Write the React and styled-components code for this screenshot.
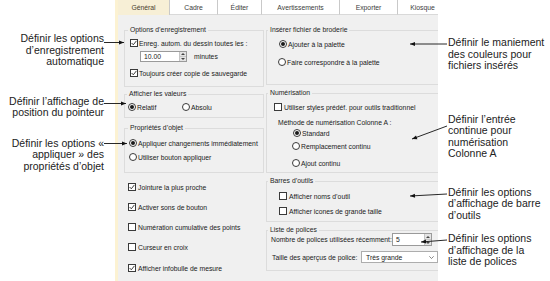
import React from 'react';
import styled, { createGlobalStyle } from 'styled-components';

const GlobalStyle = createGlobalStyle`
  html, body {
    margin: 0;
    padding: 0;
    background: #ffffff;
  }
  body {
    width: 550px;
    height: 281px;
    overflow: hidden;
  }
`

const Page = styled.div`
  position: relative;
  display: flex;
  width: 550px;
  height: 281px;
  font-family: 'Liberation Sans', Arial, sans-serif;
  color: #1a1a1a;
`

const Notes = styled.div`
  display: flex;
  flex-direction: column;
  flex-shrink: 0;
  width: ${p => p.$w}px;
  box-sizing: border-box;
  padding: ${p => (p.$right ? '0 0 0 10px' : '0 11px 0 0')};
  text-align: ${p => (p.$right ? 'left' : 'right')};
  font-size: 10.5px;
  line-height: 11.5px;
  color: #222222;
  white-space: nowrap;
`

const Note = styled.div`
  margin-top: ${p => p.$mt}px;
`

const Dialog = styled.div`
  display: flex;
  flex-shrink: 0;
  width: 323px;
  height: 281px;
  overflow: hidden;
`

const Strip = styled.div`
  width: 3px;
  flex-shrink: 0;
  background-color: #fcf2d2;
`

const DialogBody = styled.div`
  flex: 1;
  min-width: 0;
  display: flex;
  flex-direction: column;
  background-color: #f0f0f0;
`

const TabRow = styled.div`
  display: flex;
  height: 15px;
  flex-shrink: 0;
  background-color: #ffffff;
`

const Tab = styled.div`
  width: ${p => p.$w}px;
  flex-shrink: 0;
  display: flex;
  align-items: center;
  justify-content: center;
  box-sizing: border-box;
  font-size: 6.8px;
  color: ${p => (p.$active ? '#4a4030' : '#3c3c3c')};
  background-color: ${p => (p.$active ? '#f7efd6' : '#ffffff')};
  border-right: 1px solid #c9c9c9;
  border-bottom: ${p => (p.$active ? 'none' : '1px solid #d9d9d9')};
`

const Panel = styled.div`
  display: grid;
  grid-template-columns: 140px 180px;
  column-gap: 2px;
  align-items: start;
  padding: 11px 0 0 6px;
`

const Column = styled.div`
  display: flex;
  flex-direction: column;
`

const Group = styled.fieldset`
  margin: ${p => p.$mt || 0}px 0 0 0;
  padding: 0;
  min-width: 0;
  height: ${p => p.$h}px;
  box-sizing: border-box;
  border: 1px solid #dcdcdc;
`

const Legend = styled.legend`
  margin-left: ${p => p.$lx}px;
  padding: 0 2px;
  font-size: 6.8px;
  line-height: 8px;
  color: #1e1e1e;
`

const Row = styled.div`
  display: flex;
  align-items: center;
  height: ${p => p.$h || 10}px;
  margin-top: ${p => p.$mt || 0}px;
  padding-left: ${p => p.$pl || 0}px;
  font-size: 6.8px;
  white-space: nowrap;
`

const Label = styled.span`
  display: inline-block;
  width: ${p => (p.$w ? `${p.$w}px` : 'auto')};
  margin-left: ${p => p.$ml || 0}px;
`

const Box = styled.span`
  position: relative;
  display: inline-flex;
  align-items: center;
  justify-content: center;
  width: 8px;
  height: 8px;
  box-sizing: border-box;
  border: 1px solid #3a3a3a;
  border-radius: ${p => (p.$round ? '50%' : '0')};
  background-color: #ffffff;
  margin-right: ${p => p.$gap ?? 1}px;
  flex-shrink: 0;
`

const Dot = styled.span`
  width: 4px;
  height: 4px;
  border-radius: 50%;
  background-color: #1a1a1a;
`

const SpinBox = styled.div`
  display: flex;
  width: ${p => p.$w}px;
  height: ${p => p.$h}px;
  margin-left: ${p => p.$ml || 0}px;
  box-sizing: border-box;
  border: 1px solid #9a9a9a;
  background-color: #ffffff;
`

const SpinText = styled.div`
  flex: 1;
  display: flex;
  align-items: center;
  padding-left: ${p => p.$pl || 3}px;
  font-size: 6.8px;
`

const SpinButtons = styled.div`
  width: 6px;
  display: flex;
  flex-direction: column;
  border-left: 1px solid #c4c4c4;
  background-color: #e4e4e4;
`

const SpinHalf = styled.div`
  flex: 1;
  display: flex;
  align-items: center;
  justify-content: center;
  border-bottom: ${p => (p.$top ? '1px solid #c8c8c8' : 'none')};
`

const Select = styled.div`
  display: flex;
  align-items: center;
  justify-content: space-between;
  width: 77px;
  height: 12px;
  box-sizing: border-box;
  padding: 0 3px 0 4px;
  border: 1px solid #adadad;
  background-color: #ffffff;
  font-size: 6.8px;
`

const Arrows = styled.svg`
  position: absolute;
  left: 0;
  top: 0;
  pointer-events: none;
`

const CheckBox = ({ checked, gap }) => (
  <Box $gap={gap}>
    {checked && (
      <svg width="6" height="6" viewBox="0 0 6 6">
        <polyline points="0.6,3 2.3,4.8 5.4,0.9" fill="none" stroke="#2a2a2a" strokeWidth="0.9" />
      </svg>
    )}
  </Box>
)

const Radio = ({ checked, gap }) => (
  <Box $round $gap={gap}>
    {checked && <Dot />}
  </Box>
)

const Spinner = () => (
  <SpinButtons>
    <SpinHalf $top>
      <svg width="4" height="2" viewBox="0 0 4 2"><polygon points="0,2 4,2 2,0" fill="#444" /></svg>
    </SpinHalf>
    <SpinHalf>
      <svg width="4" height="2" viewBox="0 0 4 2"><polygon points="0,0 4,0 2,2" fill="#444" /></svg>
    </SpinHalf>
  </SpinButtons>
)

const tabs = [
  { label: 'Général', w: 52, active: true },
  { label: 'Cadre', w: 48 },
  { label: 'Éditer', w: 44 },
  { label: 'Avertissements', w: 78 },
  { label: 'Exporter', w: 58 },
  { label: 'Kiosque', w: 50 },
]

const leftArrows = [
  [104, 42.5, 124, 42.5],
  [104, 103.5, 126, 103.5],
  [104, 143.5, 127, 143.5],
]

const rightArrows = [
  [447, 44, 410, 44],
  [447, 126, 412, 139],
  [447, 194, 410, 196],
  [447, 240, 421, 242],
]

const arrowHead = ([x1, y1, x2, y2]) => {
  const a = Math.atan2(y2 - y1, x2 - x1)
  const len = 5
  const half = 2
  const bx = x2 - len * Math.cos(a)
  const by = y2 - len * Math.sin(a)
  const px = -Math.sin(a) * half
  const py = Math.cos(a) * half
  return `${x2},${y2} ${bx + px},${by + py} ${bx - px},${by - py}`
}

const App = () => {
  return (
    <>
      <GlobalStyle />
      <Page>
        <Notes $w={115}>
          <Note $mt={33}>Définir les options<br />d’enregistrement<br />automatique</Note>
          <Note $mt={28}>Définir l’affichage de<br />position du pointeur</Note>
          <Note $mt={19}>Définir les options «<br />appliquer » des<br />propriétés d’objet</Note>
        </Notes>

        <Dialog>
          <Strip />
          <DialogBody>
            <TabRow>
              {tabs.map(t => (
                <Tab key={t.label} $w={t.w} $active={t.active}>{t.label}</Tab>
              ))}
            </TabRow>
            <Panel>
              <Column>
                <Group $h={61}>
                  <Legend $lx={3}>Options d’enregistrement</Legend>
                  <Row $mt={4} $pl={5}>
                    <CheckBox checked />
                    Enreg. autom. du dessin toutes les :
                  </Row>
                  <Row $mt={3} $h={11} $pl={15}>
                    <SpinBox $w={47} $h={11}>
                      <SpinText $pl={3}>10.00</SpinText>
                      <Spinner />
                    </SpinBox>
                    <Label $ml={7}>minutes</Label>
                  </Row>
                  <Row $mt={6} $pl={5}>
                    <CheckBox checked />
                    Toujours créer copie de sauvegarde
                  </Row>
                </Group>

                <Group $mt={3} $h={28}>
                  <Legend $lx={2}>Afficher les valeurs</Legend>
                  <Row $mt={4} $pl={3}>
                    <Radio checked />
                    <Label $w={45}>Relatif</Label>
                    <Radio />
                    Absolu
                  </Row>
                </Group>

                <Group $mt={6} $h={49}>
                  <Legend $lx={3}>Propriétés d’objet</Legend>
                  <Row $mt={6} $pl={4}>
                    <Radio checked />
                    Appliquer changements immédiatement
                  </Row>
                  <Row $mt={4} $pl={4}>
                    <Radio />
                    Utiliser bouton appliquer
                  </Row>
                </Group>

                <Row $mt={9} $pl={4}>
                  <CheckBox checked gap={2} />
                  Jointure la plus proche
                </Row>
                <Row $mt={10} $pl={4}>
                  <CheckBox checked gap={2} />
                  Activer sons de bouton
                </Row>
                <Row $mt={10} $pl={4}>
                  <CheckBox gap={2} />
                  Numération cumulative des points
                </Row>
                <Row $mt={10} $pl={4}>
                  <CheckBox gap={2} />
                  Curseur en croix
                </Row>
                <Row $mt={11} $pl={4}>
                  <CheckBox checked gap={2} />
                  Afficher infobulle de mesure
                </Row>
              </Column>

              <Column>
                <Group $h={59}>
                  <Legend $lx={1}>Insérer fichier de broderie</Legend>
                  <Row $mt={5} $pl={12}>
                    <Radio checked />
                    Ajouter à la palette
                  </Row>
                  <Row $mt={8} $pl={11}>
                    <Radio />
                    Faire correspondre à la palette
                  </Row>
                </Group>

                <Group $mt={4} $h={84}>
                  <Legend $lx={1}>Numérisation</Legend>
                  <Row $mt={5} $pl={7}>
                    <CheckBox gap={2} />
                    Utiliser styles prédéf. pour outils traditionnel
                  </Row>
                  <Row $mt={5} $pl={11}>
                    Méthode de numérisation Colonne A :
                  </Row>
                  <Row $mt={1} $pl={26}>
                    <Radio checked />
                    Standard
                  </Row>
                  <Row $mt={3} $pl={25}>
                    <Radio />
                    Remplacement continu
                  </Row>
                  <Row $mt={7} $pl={25}>
                    <Radio />
                    Ajout continu
                  </Row>
                </Group>

                <Group $mt={4} $h={45}>
                  <Legend $lx={1}>Barres d’outils</Legend>
                  <Row $mt={6} $pl={12}>
                    <CheckBox gap={2} />
                    Afficher noms d’outil
                  </Row>
                  <Row $mt={5} $pl={12}>
                    <CheckBox gap={2} />
                    Afficher icones de grande taille
                  </Row>
                </Group>

                <Group $mt={4} $h={45}>
                  <Legend $lx={1}>Liste de polices</Legend>
                  <Row $mt={-1} $h={13} $pl={4}>
                    <Label $w={121}>Nombre de polices utilisées récemment:</Label>
                    <SpinBox $w={40} $h={13}>
                      <SpinText $pl={3}>5</SpinText>
                      <Spinner />
                    </SpinBox>
                  </Row>
                  <Row $mt={5} $h={12} $pl={5}>
                    <Label $w={89}>Taille des aperçus de police:</Label>
                    <Select>
                      Très grande
                      <svg width="5" height="3" viewBox="0 0 5 3">
                        <polyline points="0.3,0.3 2.5,2.5 4.7,0.3" fill="none" stroke="#555" strokeWidth="0.7" />
                      </svg>
                    </Select>
                  </Row>
                </Group>
              </Column>
            </Panel>
          </DialogBody>
        </Dialog>

        <Notes $w={112} $right>
          <Note $mt={37}>Définir le maniement<br />des couleurs pour<br />fichiers insérés</Note>
          <Note $mt={42}>Définir l’entrée<br />continue pour<br />numérisation<br />Colonne A</Note>
          <Note $mt={27}>Définir les options<br />d’affichage de barre<br />d’outils</Note>
          <Note $mt={12}>Définir les options<br />d’affichage de la<br />liste de polices</Note>
        </Notes>

        <Arrows width="550" height="281" viewBox="0 0 550 281">
          {[...leftArrows, ...rightArrows].map((l, i) => (
            <g key={i}>
              <line x1={l[0]} y1={l[1]} x2={l[2]} y2={l[3]} stroke="#111" strokeWidth="0.9" />
              <polygon points={arrowHead(l)} fill="#111" />
            </g>
          ))}
        </Arrows>
      </Page>
    </>
  )
}

export default App
